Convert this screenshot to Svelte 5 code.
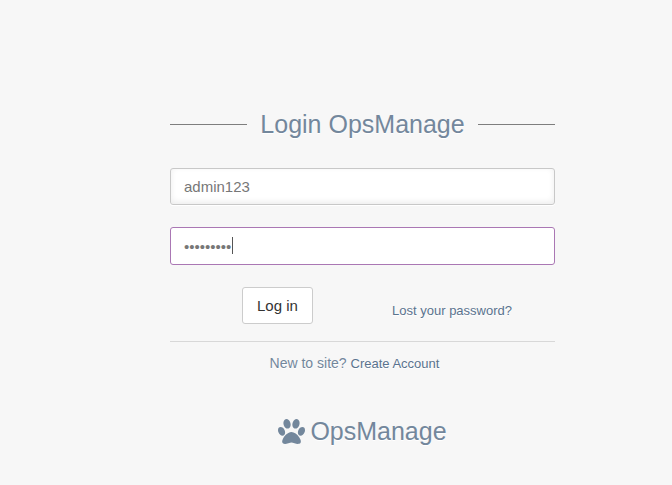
<script lang="ts">
	let username = $state('admin123');
	let password = $state('admin1234');
	let typing = $state(true);
</script>

<main class="login">
	<form class="login-form" onsubmit={(e) => e.preventDefault()}>
		<h1 class="title">Login OpsManage</h1>

		<div class="field">
			<input type="text" aria-label="Username" autocomplete="off" bind:value={username} />
		</div>

		<div class="field">
			<input
				class="active"
				type="password"
				aria-label="Password"
				autocomplete="off"
				bind:value={password}
				onfocus={() => (typing = false)}
			/>
			{#if typing}
				<span class="caret" aria-hidden="true"></span>
			{/if}
		</div>

		<div class="actions">
			<button type="submit">Log in</button>
			<a href="#reset">Lost your password?</a>
		</div>

		<footer class="separator">
			<p>New to site? <a href="#signup">Create Account</a></p>
			<h2 class="brand">
				<svg viewBox="0 0 1664 1536" aria-hidden="true">
					<path
						transform="translate(0 1408) scale(1 -1)"
						d="M780 1064q0 -60 -19 -113.5t-63 -92.5t-105 -39q-76 0 -138 57.5t-92 135.5t-30 151q0 60 19 113.5t63 92.5t105 39q77 0 138.5 -57.5t91.5 -135t30 -151.5zM438 581q0 -80 -42 -139t-119 -59q-76 0 -141.5 55.5t-100.5 133.5t-35 152q0 80 42 139.5t119 59.5q76 0 141.5 -55.5t100.5 -134t35 -152.5zM832 608q118 0 255 -97.5t229 -237t92 -254.5q0 -46 -17 -76.5t-48.5 -45t-64.5 -20t-76 -5.5q-68 0 -187.5 45t-182.5 45q-66 0 -192.5 -44.5t-200.5 -44.5q-183 0 -183 146q0 86 56 191.5t139.5 192.5t187.5 146t193 59zM1071 819q-61 0 -105 39t-63 92.5t-19 113.5q0 74 30 151.5t91.5 135t138.5 57.5q61 0 105 -39t63 -92.5t19 -113.5q0 -73 -30 -151t-92 -135.5t-138 -57.5zM1503 923q77 0 119 -59.5t42 -139.5q0 -74 -35 -152t-100.5 -133.5t-141.5 -55.5q-77 0 -119 59t-42 139q0 74 35 152.5t100.5 134t141.5 55.5z"
					/>
				</svg>
				OpsManage
			</h2>
		</footer>
	</form>
</main>

<style>
	:global(body) {
		background: #f7f7f7;
	}

	.login {
		padding: 108px 0 24px 53px;
		color: #73879c;
		font-family: 'Liberation Sans', Arial, Helvetica, sans-serif;
		font-size: 14px;
		line-height: 20px;
		text-shadow: 0 1px 0 #fff;
	}

	.login-form {
		max-width: 385px;
		margin: 0 auto;
	}

	.title,
	.brand {
		display: flex;
		align-items: center;
		justify-content: center;
		margin: 0;
		font-size: 25px;
		font-weight: normal;
		line-height: 32px;
	}

	.title {
		gap: 13px;
		margin-bottom: 28px;
	}

	/* Rules on both sides of the heading */
	.title::before,
	.title::after {
		content: '';
		flex: 1;
		height: 1px;
		background: #7e7e7e;
	}

	.field {
		position: relative;
		margin-bottom: 22px;
	}

	input {
		display: block;
		box-sizing: border-box;
		width: 100%;
		height: 37px;
		padding: 0 13px;
		border: 1px solid #c8c8c8;
		border-radius: 3px;
		outline: 0;
		background: #fff;
		box-shadow:
			0 1px 0 #fff,
			inset 0 -2px 6px rgba(0, 0, 0, 0.08);
		color: #777;
		font-family: inherit;
		font-size: 15px;
	}

	input.active,
	input:focus {
		height: 38px;
		border-color: #aa77b4;
		box-shadow: none;
	}

	.caret {
		position: absolute;
		top: 10px;
		left: 62px;
		width: 1px;
		height: 17px;
		background: #555;
	}

	.actions {
		display: flex;
		align-items: center;
		justify-content: space-between;
		padding: 0 43px 0 72px;
	}

	button {
		height: 37px;
		padding: 0 14px;
		border: 1px solid #ccc;
		border-radius: 3px;
		background: #fff;
		color: #333;
		font-family: inherit;
		font-size: 15px;
		cursor: pointer;
	}

	a {
		color: #5a738e;
		font-size: 13px;
		text-decoration: none;
	}

	.actions a {
		padding-top: 10px;
	}

	.separator {
		margin-top: 17px;
		padding-top: 11px;
		border-top: 1px solid #d8d8d8;
		text-align: center;
	}

	.separator p {
		margin: 0 16px 41px 0;
	}

	.brand {
		gap: 5px;
	}

	.brand svg {
		width: 27px;
		height: 25px;
		fill: currentColor;
	}
</style>
